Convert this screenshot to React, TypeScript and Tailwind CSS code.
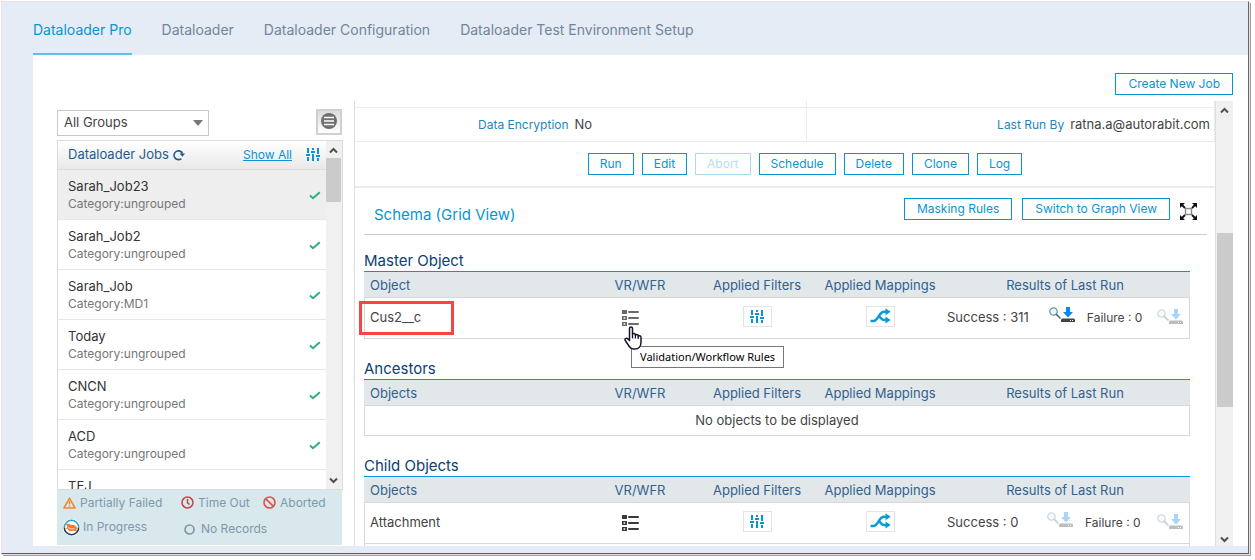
import React from "react";

const jobs: { name: string; category?: string }[] = [
  { name: "Sarah_Job23", category: "ungrouped" },
  { name: "Sarah_Job2", category: "ungrouped" },
  { name: "Sarah_Job", category: "MD1" },
  { name: "Today", category: "ungrouped" },
  { name: "CNCN", category: "ungrouped" },
  { name: "ACD", category: "ungrouped" },
  { name: "TEJ" },
];

const tabs = [
  "Dataloader Pro",
  "Dataloader",
  "Dataloader Configuration",
  "Dataloader Test Environment Setup",
];

const actions = ["Run", "Edit", "Abort", "Schedule", "Delete", "Clone", "Log"];

function SlidersIcon() {
  return (
    <svg width="14" height="13" viewBox="0 0 14 13" fill="#0795d3" aria-hidden="true">
      <path d="M1 0h2v5H1zM0 6h4v2H0zM1 9h2v4H1zM6 0h2v2H6zM5 3h4v2H5zM6 6h2v7H6zM11 0h2v6h-2zM10 7h4v2h-4zM11 10h2v3h-2z" />
    </svg>
  );
}

function RefreshIcon() {
  return (
    <svg width="12" height="12" viewBox="0 0 12 12" aria-hidden="true">
      <path d="M8.300 9.600A4.400 4.400 0 1 1 9.500 4.600" fill="none" stroke="#1f5c8e" strokeWidth="1.600" />
      <path d="M6.600 4.400H12L9.400 7.800z" fill="#1f5c8e" />
    </svg>
  );
}

function CheckIcon() {
  return (
    <svg width="12" height="9" viewBox="0 0 12 9" aria-hidden="true">
      <path d="M1 4.400 4 7.200 10.800 1.200" fill="none" stroke="#2fae84" strokeWidth="2" />
    </svg>
  );
}

function ListIcon({ color }: { color: string }) {
  return (
    <svg width="17" height="16" viewBox="0 0 17 16" fill={color} aria-hidden="true">
      <path d="M0 0h5v4H0z" />
      <path fillRule="evenodd" d="M0 6h5v4H0zm1.600 1.300v1.400h1.600V7.300zM0 12h5v4H0zm1.600 1.300v1.400h1.600v-1.400z" />
      <rect x="6" y="1" width="11" height="2" rx="1" />
      <rect x="6" y="7" width="11" height="2" rx="1" />
      <rect x="6" y="13" width="11" height="2" rx="1" />
    </svg>
  );
}

function MappingIcon() {
  return (
    <svg width="21" height="16" viewBox="0 0 21 16" aria-hidden="true">
      <g fill="none" stroke="#0a9bd8" strokeWidth="2.600">
        <path d="M0.500 13H3.500C8 13 9 3.800 14 3.800H17" />
        <path d="M9 8.500C11 9 11 12 14.500 12H17" />
      </g>
      <path d="M15.500 0.300 20.700 3.800 15.500 7.300zM15.500 8.500 20.700 12 15.500 15.500z" fill="#0a9bd8" />
    </svg>
  );
}

function SearchIcon() {
  return (
    <svg width="12" height="12" viewBox="0 0 12 12" fill="none" aria-hidden="true">
      <circle cx="4.500" cy="4.500" r="3.700" fill="#eef6fb" stroke="#6d94ab" strokeWidth="1.300" />
      <path d="M7.300 7.300 11 11" stroke="#4f7488" strokeWidth="1.700" strokeLinecap="round" />
    </svg>
  );
}

function DownloadIcon() {
  return (
    <svg width="14" height="15" viewBox="0 0 14 15" aria-hidden="true">
      <path d="M5 0h4v5h3L7 10.500 2 5h3z" fill="#0d86f5" />
      <path d="M1 11.500h12l1 1V15H0v-2.500z" fill="#444" />
      <path d="M9 13h1v1H9zM11 13h1v1h-1z" fill="#fff" />
    </svg>
  );
}

function ExpandIcon() {
  return (
    <svg width="17" height="17" viewBox="0 0 17 17" aria-hidden="true">
      <rect x="5.500" y="5.500" width="6" height="6" fill="none" stroke="#888" strokeWidth="1.400" />
      <path d="M1 1l4 4M16 1l-4 4M1 16l4-4M16 16l-4-4" stroke="#111" strokeWidth="1.800" />
      <path d="M0 0h5L0 5zM17 0v5L12 0zM0 17v-5L5 17zM17 17h-5L17 12z" fill="#111" />
    </svg>
  );
}

function MenuCircleIcon() {
  return (
    <svg width="16" height="16" viewBox="0 0 16 16" className="shrink-0" aria-hidden="true">
      <circle cx="8" cy="8" r="8" fill="#707070" />
      <path d="M3 4.500h10M3 8h10M3 11.500h10" stroke="#fff" strokeWidth="1.300" />
    </svg>
  );
}

function HandCursor() {
  return (
    <svg width="18" height="24" viewBox="0 0 18 24" aria-hidden="true">
      <path
        d="M5.500 14.500V2.500C5.500 .5 8.500 .5 8.500 2.500V8.500C8.700 7 11.300 7 11.400 8.800V9.500C11.700 8 14.100 8.200 14.200 9.800V10.500C14.600 9.300 17 9.500 17 11.500V16.500C17 20.500 14.500 23 11 23H9.500C7.500 23 6.300 22 5.300 20.500L1.300 14.500C.3 12.800 2.300 11.500 3.600 12.600Z"
        fill="#fff"
        stroke="#16162a"
        strokeWidth="1.500"
        strokeLinejoin="round"
      />
      <path d="M8.500 8.500V12.500M11.400 9.500V12.500M14.200 10.500V13" stroke="#16162a" strokeWidth="1.300" />
    </svg>
  );
}

function Chevron({ down = false }: { down?: boolean }) {
  return (
    <svg width="9" height="7" viewBox="0 0 9 7" aria-hidden="true">
      <path d={down ? "M1 1.500 4.500 5 8 1.500" : "M1 5.500 4.500 2 8 5.500"} fill="none" stroke="#505050" strokeWidth="2" />
    </svg>
  );
}

function Button({ children, className = "", disabled = false }: { children: React.ReactNode; className?: string; disabled?: boolean }) {
  return (
    <button
      type="button"
      disabled={disabled}
      className={`h-[22px] border border-[#0795d3] bg-white text-[12px] leading-5 whitespace-nowrap text-[#0795d3] disabled:border-[#a9dcf0] disabled:text-[#b5e0f2] ${className}`}
    >
      {children}
    </button>
  );
}

function ResultTools({ faded }: { faded: boolean }) {
  return (
    <span className={`flex ${faded ? "opacity-35" : ""}`}>
      <button type="button" aria-label="View records" className="flex items-start">
        <SearchIcon />
      </button>
      <button type="button" aria-label="Download records" className="flex items-start">
        <DownloadIcon />
      </button>
    </span>
  );
}

type Row = { name: string; success: number; hovered?: boolean };

function ObjectTable({ title, first, rows, tall, more }: { title: string; first: string; rows: Row[]; tall?: boolean; more?: boolean }) {
  return (
    <section>
      <h2 className={`flex items-end text-[15px] leading-5 text-[#0c3e73] ${tall ? "h-10" : "h-9"}`}>{title}</h2>
      <table className="w-full table-fixed border-separate border-spacing-0 border-t border-t-[#0795d3] text-[13px] text-[#444]">
        <colgroup>
          <col />
          <col className="w-[108px]" />
          <col className="w-[126px]" />
          <col className="w-[120px]" />
          <col className="w-[250px]" />
        </colgroup>
        <thead>
          <tr className="h-[26px] bg-[#e2e8ea] text-[#33618f] [&>th]:border-b [&>th]:border-[#d8d8d8] [&>th]:px-0 [&>th]:pt-0.5 [&>th]:pb-0 [&>th]:font-normal">
            <th className="text-left">
              <span className="pl-1.5">{first}</span>
            </th>
            <th>VR/WFR</th>
            <th>Applied Filters</th>
            <th>Applied Mappings</th>
            <th>Results of Last Run</th>
          </tr>
        </thead>
        <tbody>
          {rows.length === 0 && (
            <tr className="h-[30px]">
              <td colSpan={5} className="border border-t-0 border-[#d8d8d8] p-0 text-center">
                No objects to be displayed
              </td>
            </tr>
          )}
          {rows.map((row) => (
            <tr key={row.name} className="h-[41px] [&>td]:border-b [&>td]:border-[#d8d8d8] [&>td]:p-0">
              <td className="relative border-l">
                <span className="pl-[5px]">{row.name}</span>
                {row.hovered && <span className="absolute top-[3px] -left-1.5 h-[34px] w-[95px] border-3 border-[#f94444]" />}
              </td>
              <td>
                <div className="relative flex justify-center pr-5">
                  <button type="button" aria-label="Validation/Workflow Rules">
                    <ListIcon color={row.hovered ? "#6b6b6b" : "#3a3a3a"} />
                  </button>
                  {row.hovered && (
                    <>
                      <span className="absolute top-4 left-[38px] z-20">
                        <HandCursor />
                      </span>
                      <span
                        role="tooltip"
                        className="absolute top-9 left-[45px] z-10 border border-[#767676] bg-white px-2 font-['Noto_Sans',sans-serif] text-[11px] leading-5 whitespace-nowrap text-black"
                      >
                        Validation/Workflow Rules
                      </span>
                    </>
                  )}
                </div>
              </td>
              <td>
                <button type="button" aria-label="Filters" className="mx-auto mb-1 flex h-[21px] w-[29px] items-center justify-center border border-[#e4e4e4]">
                  <SlidersIcon />
                </button>
              </td>
              <td>
                <button type="button" aria-label="Mappings" className="mx-auto mb-1 flex h-[21px] w-[29px] items-center justify-center border border-[#e4e4e4]">
                  <MappingIcon />
                </button>
              </td>
              <td className="border-r">
                <div className="flex items-center pr-1.5 pl-[7px]">
                  <span className="min-w-20">Success : {row.success}</span>
                  <span className="mb-2 ml-5">
                    <ResultTools faded={row.success === 0} />
                  </span>
                  <span className="ml-3 text-[12px]">Failure : 0</span>
                  <span className="mb-1 ml-auto">
                    <ResultTools faded />
                  </span>
                </div>
              </td>
            </tr>
          ))}
          {more && (
            <tr className="h-[41px]">
              <td colSpan={5} className="border-x border-[#d8d8d8]" />
            </tr>
          )}
        </tbody>
      </table>
    </section>
  );
}

function Legend() {
  return (
    <ul className="grid h-[55px] w-[285px] shrink-0 grid-cols-[118px_82px_1fr] grid-rows-[25px_24px] items-center bg-[#d8e8ec] pl-1.5 text-[12px] whitespace-nowrap text-[#8098ad]">
      <li className="flex items-center gap-1">
        <svg width="13" height="12" viewBox="0 0 13 12" className="shrink-0" aria-hidden="true">
          <path d="M6.500 1.200 12 11H1z" fill="none" stroke="#f08a2c" strokeWidth="1.600" strokeLinejoin="round" />
          <path d="M6.500 4v3.500M6.500 8.500v1.300" stroke="#f08a2c" strokeWidth="1.400" />
        </svg>
        Partially Failed
      </li>
      <li className="flex items-center gap-1">
        <svg width="13" height="13" viewBox="0 0 13 13" fill="none" stroke="#c0454a" strokeWidth="1.500" className="shrink-0" aria-hidden="true">
          <circle cx="6.500" cy="6.500" r="5.500" />
          <path d="M6.500 3v3.800L8.500 8.500" />
        </svg>
        Time Out
      </li>
      <li className="flex items-center gap-1">
        <svg width="13" height="13" viewBox="0 0 13 13" fill="none" stroke="#d9534a" strokeWidth="1.600" className="shrink-0" aria-hidden="true">
          <circle cx="6.500" cy="6.500" r="5.500" />
          <path d="M2.600 2.600l7.800 7.800" />
        </svg>
        Aborted
      </li>
      <li className="flex items-center gap-[3px]">
        <svg width="17" height="17" viewBox="0 0 17 17" className="shrink-0" aria-hidden="true">
          <circle cx="8.500" cy="8.500" r="8.500" fill="#fff" />
          <path d="M1.300 8.500a7.200 7.200 0 0 1 14.400 0" fill="none" stroke="#2ba3d6" strokeWidth="1.500" />
          <path d="M1.300 8.500a7.200 7.200 0 0 0 14.400 0" fill="none" stroke="#22375a" strokeWidth="1.500" />
          <path d="M3 5.200C4.500 3.500 6.500 5 8 6c2-.6 4 .2 5 1.700l1.500 1.200-1.200 1.300.7 2.300-3.500-.8-4 .5-1.800-2.200-2-.6 1.800-1.300z" fill="#f27a2a" />
          <path d="M5 8.700l3.500 1.300 3-.5" fill="none" stroke="#fff" strokeWidth="0.700" />
        </svg>
        In Progress
      </li>
      <li className="flex items-center gap-1.5 pt-1 pl-[3px]">
        <svg width="11" height="11" viewBox="0 0 11 11" className="shrink-0" aria-hidden="true">
          <circle cx="5.500" cy="5.500" r="4.500" fill="none" stroke="#8098ad" strokeWidth="1.700" />
        </svg>
        No Records
      </li>
    </ul>
  );
}

function Sidebar() {
  return (
    <aside className="flex w-[286px] shrink-0 flex-col pt-2 pb-px">
      <div className="flex w-[285px] justify-between">
        <div className="relative">
          <select
            aria-label="Job group"
            defaultValue="All Groups"
            className="h-[26px] w-[152px] appearance-none border border-[#c8c8c8] bg-white pl-1.5 text-[13px] text-[#444]"
          >
            <option>All Groups</option>
          </select>
          <svg className="pointer-events-none absolute top-[11px] right-1.5" width="10" height="6" viewBox="0 0 10 6" aria-hidden="true">
            <path d="M0 0h10L5 6z" fill="#777" />
          </svg>
        </div>
        <button type="button" aria-label="Toggle list" className="flex h-[26px] w-[26px] justify-center border-2 border-[#d0d0d0] bg-linear-to-b from-[#dcdcdc] to-white pt-0.5">
          <MenuCircleIcon />
        </button>
      </div>
      <div className="mt-1 flex min-h-0 flex-1 border border-[#dcdcdc]">
        <div className="flex min-w-0 flex-1 flex-col">
          <header className="flex h-[29px] shrink-0 items-center border-b border-[#dcdcdc] bg-linear-to-b from-white to-[#e9e9e9] pr-1.5 pl-2.5">
            <h2 className="text-[13px] text-[#1f5c8e]">Dataloader Jobs</h2>
            <button type="button" aria-label="Refresh jobs" className="ml-1">
              <RefreshIcon />
            </button>
            <a href="#all" className="mr-3.5 ml-auto text-[12px] text-[#0a93d6] underline">
              Show All
            </a>
            <button type="button" aria-label="Filter jobs">
              <SlidersIcon />
            </button>
          </header>
          <ul className="min-h-0 flex-1 overflow-hidden">
            {jobs.map((job) => (
              <li
                key={job.name}
                className="flex h-[50px] justify-between border-b border-[#e8e8e8] pt-[7px] pr-[5px] pl-2.5 first:bg-[#eeeeee]"
              >
                <div>
                  <p className="text-[13px] leading-[18px] text-[#333]">{job.name}</p>
                  {job.category && <p className="text-[12px] leading-[18px] text-[#777]">Category:{job.category}</p>}
                </div>
                <span className="pt-3.5">
                  <CheckIcon />
                </span>
              </li>
            ))}
          </ul>
        </div>
        <div className="flex w-4 flex-col items-center justify-between bg-[#f0f0f0] pr-px">
          <div className="flex flex-col items-center gap-1 pt-1.5">
            <Chevron />
            <span className="h-11 w-[15px] bg-[#cbcbcb]" />
          </div>
          <span className="pb-[5px]">
            <Chevron down />
          </span>
        </div>
      </div>
      <Legend />
    </aside>
  );
}

export default function App() {
  return (
    <div className="h-screen bg-white pt-px pr-1.5 pb-1.5 pl-px font-['Inter',sans-serif]">
      <div className="flex h-full flex-col overflow-hidden border border-t-[#eedfe0] border-r-[#6b6468] border-b-[#5d5a66] border-l-[#eedfe0] bg-[#e5ecf5] pb-[7px] shadow-[1px_1px_0_#e6dfe0,2px_2px_0_#a39c9e]">
        <nav className="flex h-[53px] shrink-0 gap-[30px] pl-[31px] text-[14px]">
          {tabs.map((tab, i) => (
            <a
              key={tab}
              href="#tab"
              className={
                i === 0
                  ? "border-b-2 border-[#62bfe3] pt-[18px] leading-5 text-[#0a93d6]"
                  : "pt-[18px] leading-5 text-[#73859a]"
              }
            >
              {tab}
            </a>
          ))}
        </nav>
        <main className="ml-[31px] flex min-h-0 flex-1 flex-col bg-white pr-[15px] pl-6">
          <div className="flex shrink-0 justify-end pt-[18px] pb-1.5">
            <Button className="px-3">Create New Job</Button>
          </div>
          <div className="flex min-h-0 flex-1 gap-[11px]">
            <Sidebar />
            <div className="flex min-w-0 flex-1 overflow-hidden border-l border-[#dedede]">
              <div className="min-w-0 flex-1 overflow-hidden">
                <div className="grid grid-cols-[452px_1fr] text-[#444]">
                  <div className="h-1.5 border-r border-[#ebebeb]" />
                  <div className="h-1.5 border-r border-[#ebebeb]" />
                  <div className="flex h-[35px] items-center gap-1.5 border-y border-r border-[#ebebeb] pl-[123px]">
                    <span className="text-[12px] text-[#1c86bd]">Data Encryption</span>
                    <span className="text-[13px]">No</span>
                  </div>
                  <div className="flex h-[35px] items-center justify-end gap-1.5 border-y border-r border-[#ebebeb] pr-1">
                    <span className="text-[12px] text-[#1c86bd]">Last Run By</span>
                    <span className="text-[13px]">ratna.a@autorabit.com</span>
                  </div>
                </div>
                <div className="flex h-[46px] items-center justify-center gap-2 border-b-2 border-[#ebebeb] pl-10">
                  {actions.map((label) => (
                    <Button key={label} disabled={label === "Abort"} className="px-[11px]">
                      {label}
                    </Button>
                  ))}
                </div>
                <div className="mr-2 ml-[9px] flex h-[47px] items-center border-b border-[#cfcfcf] pr-2.5 pl-2.5">
                  <h1 className="pt-2 text-[15px] text-[#0795d3]">Schema (Grid View)</h1>
                  <div className="ml-auto flex items-center gap-2.5">
                    <Button className="mb-1 px-3">Masking Rules</Button>
                    <Button className="mb-1 px-3">Switch to Graph View</Button>
                    <button type="button" aria-label="Expand view">
                      <ExpandIcon />
                    </button>
                  </div>
                </div>
                <div className="mr-[25px] ml-[9px]">
                  <ObjectTable title="Master Object" first="Object" rows={[{ name: "Cus2__c", success: 311, hovered: true }]} />
                  <ObjectTable tall title="Ancestors" first="Objects" rows={[]} />
                  <ObjectTable tall more title="Child Objects" first="Objects" rows={[{ name: "Attachment", success: 0 }]} />
                </div>
              </div>
              <div className="flex w-[18px] shrink-0 flex-col items-center border-l border-[#dedede] bg-[#f0f0f0]">
                <span className="pt-1.5">
                  <Chevron />
                </span>
                <span className="flex-[118]" />
                <span className="w-4 flex-[172] bg-[#cbcbcb]" />
                <span className="flex-[128]" />
                <span className="pb-[3px]">
                  <Chevron down />
                </span>
              </div>
            </div>
          </div>
        </main>
      </div>
    </div>
  );
}
